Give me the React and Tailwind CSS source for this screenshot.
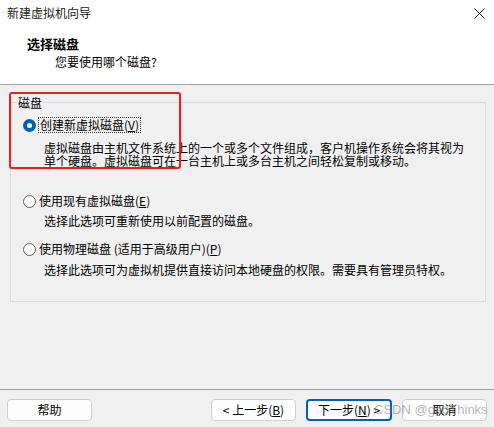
import React from "react";

function Radio({ checked }) {
  if (checked) {
    return (
      <span className="flex h-[13px] w-[13px] shrink-0 items-center justify-center rounded-full bg-[#005fb8]">
        <span className="h-[5px] w-[5px] rounded-full bg-white" />
      </span>
    );
  }
  return (
    <span className="h-[13px] w-[13px] shrink-0 rounded-full border border-[#5f5f5f] bg-[#fbfbfb]" />
  );
}

function Btn({ children, primary }) {
  return (
    <button
      className={
        primary
          ? "flex h-[22px] w-[86px] items-center justify-center rounded-[4px] border-2 border-[#005fb8] bg-[#fdfdfd] text-[12px] leading-none text-black"
          : "flex h-[22px] w-[85px] items-center justify-center rounded-[4px] border border-[#d0d0d0] bg-[#fdfdfd] text-[12px] leading-none text-black"
      }
    >
      {children}
    </button>
  );
}

export default function App() {
  return (
    <div
      className="relative flex h-[427px] w-[494px] flex-col overflow-hidden bg-[#f0f0f0] text-black"
      style={{ fontFamily: '"Noto Sans CJK SC", "Noto Sans", sans-serif' }}
    >
      {/* Header */}
      <div className="h-[85px] shrink-0 border-b border-[#a0a0a0] bg-white">
        <div className="flex h-[26px] items-center justify-between pl-[7px] pr-[9px]">
          <span className="text-[12px] leading-none text-[#1a1a1a]">新建虚拟机向导</span>
          <svg width="11" height="11" viewBox="0 0 11 11" className="mt-[1px]">
            <path d="M0.5 0.5 L10.5 10.5 M10.5 0.5 L0.5 10.5" stroke="#222" strokeWidth="1" />
          </svg>
        </div>
        <div className="pl-[27px] pt-[10px] text-[13px] font-bold leading-[16px]">选择磁盘</div>
        <div className="pl-[55px] pt-[2px] text-[12px] leading-[16px]">您要使用哪个磁盘?</div>
      </div>

      {/* Main */}
      <div className="flex-1 px-[10px] pt-[17px]">
        <div className="relative h-[200px] w-[476px] border border-[#dcdcdc]">
          <span className="absolute -top-[8px] left-[6px] bg-[#f0f0f0] px-[1px] text-[12px] leading-[16px]">
            磁盘
          </span>

          <div className="ml-[12px] mt-[14px] flex h-[16px] items-center gap-[2px]">
            <Radio checked />
            <span className="border border-dotted border-[#333] px-[1px] text-[12px] leading-[14px]">
              创建新虚拟磁盘(<span className="underline">V</span>)
            </span>
          </div>
          <div className="mt-[8px] whitespace-nowrap pl-[33px] text-[12px] leading-[13px]">
            虚拟磁盘由主机文件系统上的一个或多个文件组成，客户机操作系统会将其视为
            <br />
            单个硬盘。虚拟磁盘可在一台主机上或多台主机之间轻松复制或移动。
          </div>

          <div className="ml-[12px] mt-[26px] flex h-[16px] items-center gap-[3px]">
            <Radio />
            <span className="text-[12px] leading-[16px]">
              使用现有虚拟磁盘(<span className="underline">E</span>)
            </span>
          </div>
          <div className="mt-[4px] pl-[33px] text-[12px] leading-[16px]">
            选择此选项可重新使用以前配置的磁盘。
          </div>

          <div className="ml-[12px] mt-[12px] flex h-[16px] items-center gap-[3px]">
            <Radio />
            <span className="text-[12px] leading-[16px]">
              使用物理磁盘 (适用于高级用户)(<span className="underline">P</span>)
            </span>
          </div>
          <div className="mt-[5px] pl-[33px] text-[12px] leading-[16px]">
            选择此选项可为虚拟机提供直接访问本地硬盘的权限。需要具有管理员特权。
          </div>
        </div>
      </div>

      {/* Footer */}
      <div className="h-[38px] shrink-0 border-t border-[#a0a0a0] px-[7px] pt-[9px]">
        <div className="flex items-start justify-between">
          <Btn>帮助</Btn>
          <div className="flex gap-[10px]">
            <Btn>
              &lt; 上一步(<span className="underline">B</span>)
            </Btn>
            <Btn primary>
              下一步(<span className="underline">N</span>) &gt;
            </Btn>
            <Btn>取消</Btn>
          </div>
        </div>
      </div>

      {/* Red annotation box */}
      <div className="pointer-events-none absolute left-[9px] top-[92px] h-[77px] w-[172px] rounded-[3px] border-2 border-[#f01c1c]" />

      {/* Watermark */}
      <div
        className="pointer-events-none absolute left-[374px] top-[402px] whitespace-nowrap text-[13px] leading-[16px] text-[rgba(120,120,120,0.55)]"
        style={{ fontFamily: '"Liberation Sans", Arial, sans-serif' }}
      >
        CSDN @gaoThinks
      </div>
    </div>
  );
}
